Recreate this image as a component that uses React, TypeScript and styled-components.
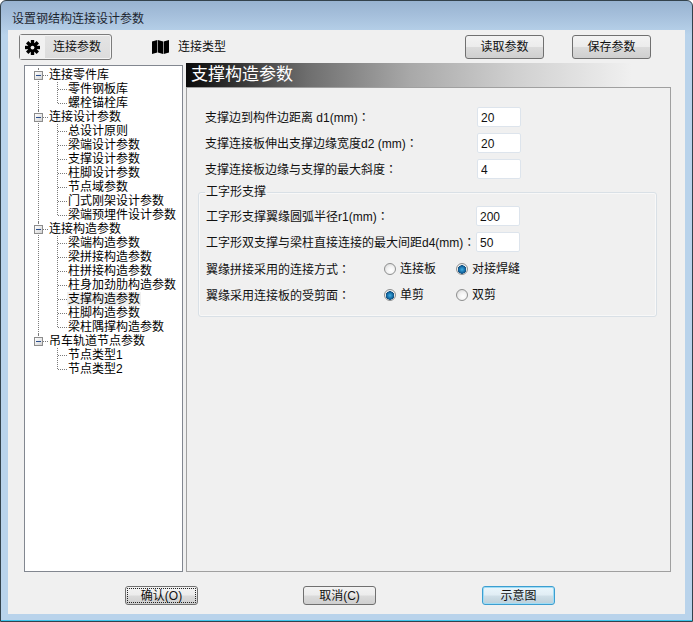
import styled, { createGlobalStyle } from "styled-components"

const GlobalStyle = createGlobalStyle`
    html, body {
        margin: 0;
        padding: 0;
        background: #fff;
    }
    * {
        box-sizing: border-box;
    }
`;

const FONT = `"Liberation Sans", "Noto Sans CJK SC", sans-serif`;

const Win = styled.div`
    width: 693px;
    height: 622px;
    display: flex;
    flex-direction: column;
    border: 1px solid #33424c;
    border-radius: 6px 6px 0 0;
    background: linear-gradient(#98b3d1 0, #a5bfdb 14px, #b9d3eb 34px, #b9d3eb 100%);
    box-shadow: inset 0 -1px 0 #3fc4ea;
    font: 12px/14px ${FONT};
    color: #111;
    overflow: hidden;
`;
const TitleBar = styled.div`
    height: 29px;
    flex: none;
    display: flex;
    align-items: center;
    padding: 7px 0 0 11px;
    color: #1c2530;
`;
const Client = styled.div`
    flex: 1;
    margin: 0 7px 7px 7px;
    background: #f0f0f0;
    display: flex;
    flex-direction: column;
`;
const Toolbar = styled.div`
    height: 33px;
    flex: none;
    display: flex;
    align-items: center;
    padding: 1px 34px 0 11px;
`;
const ToolTab = styled.div<{ $active?: boolean }>`
    width: 93px;
    height: 26px;
    display: flex;
    align-items: center;
    border-radius: 3px;
    margin-right: 36px;
    ${(p) => p.$active && `
        border: 1px solid #7c7c7c;
        background: linear-gradient(#e4e4e4, #dcdcdc);
        box-shadow: inset 0 0 0 1px #f4f4f4;
    `}
`;
const TabIcon = styled.span<{ $active?: boolean }>`
    width: 25px;
    height: 24px;
    margin-right: ${(p) => (p.$active ? "8px" : "5px")};
    flex: none;
    display: flex;
    align-items: center;
    justify-content: center;
    background: ${(p) => (p.$active ? "#f1f1f1" : "transparent")};
`;
const Spacer = styled.div`
    flex: 1;
`;
const ToolButton = styled.button`
    height: 24px;
    width: 79px;
    margin-left: 28px;
    padding: 0;
    border: 1px solid #707070;
    border-radius: 3px;
    background: linear-gradient(#f3f3f3 0, #ececec 48%, #dbdbdb 52%, #cfcfcf 100%);
    font: 12px/14px ${FONT};
    color: #111;
`;
const Main = styled.div`
    height: 509px;
    flex: none;
    display: flex;
    gap: 3px;
    padding: 0 14px 0 16px;
`;
const Tree = styled.div`
    width: 159px;
    height: 507px;
    margin-top: 2px;
    padding-top: 2px;
    background: #fff;
    border: 1px solid #828790;
    color: #000;
    font-size: 12px;
`;
const TopGroup = styled.div<{ $last?: boolean }>`
    position: relative;
    &::before {
        content: "";
        position: absolute;
        left: 13px;
        top: 0;
        height: ${(p) => (p.$last ? "6px" : "100%")};
        border-left: 1px dotted #7a7a7a;
    }
`;
const TopRow = styled.div`
    position: relative;
    height: 14px;
    display: flex;
    align-items: center;
    padding-left: 9px;
`;
const Expander = styled.span`
    position: relative;
    z-index: 1;
    width: 9px;
    height: 9px;
    flex: none;
    border: 1px solid #8c8c8c;
    background: linear-gradient(135deg, #fff, #d4d4d4);
    &::after {
        content: "";
        position: absolute;
        left: 1px;
        right: 1px;
        top: 3px;
        height: 1px;
        background: #2b4e8c;
    }
`;
const TopStub = styled.span`
    width: 5px;
    flex: none;
    border-top: 1px dotted #7a7a7a;
`;
const ChildList = styled.div`
    position: relative;
    &::before {
        content: "";
        position: absolute;
        left: 32px;
        top: 0;
        bottom: 7px;
        border-left: 1px dotted #7a7a7a;
    }
`;
const ChildRow = styled.div`
    height: 14px;
    display: flex;
    align-items: center;
    padding-left: 33px;
`;
const ChildStub = styled.span`
    width: 9px;
    flex: none;
    border-top: 1px dotted #7a7a7a;
`;
const NodeLabel = styled.span<{ $selected?: boolean }>`
    padding: 0 1px;
    white-space: nowrap;
    line-height: 14px;
    background: ${(p) => (p.$selected ? "#efefef" : "transparent")};
`;
const Right = styled.div`
    width: 485px;
    display: flex;
    flex-direction: column;
`;
const Banner = styled.div`
    height: 24px;
    flex: none;
    padding-left: 5px;
    display: flex;
    align-items: center;
    background: linear-gradient(90deg, #0a0a0a 0, #6e6e6e 25%, #a8a8a8 46%, #d0d0d0 68%, #f0f0f0 92%);
    color: #fff;
    font-size: 17px;
`;
const Panel = styled.div`
    flex: 1;
    border: 1px solid #a0a0a0;
    padding: 19px 13px 0 11px;
`;
const FormRow = styled.div<{ $spaced?: boolean }>`
    height: 20px;
    margin-bottom: ${(p) => (p.$spaced ? "7px" : "6px")};
    display: flex;
    align-items: center;
    padding-left: 7px;
`;
const Label = styled.span`
    white-space: nowrap;
`;
const Colon = styled.span`
    font-family: "Noto Sans CJK TC", sans-serif;
`;
const NumberInput = styled.input`
    width: 44px;
    height: 20px;
    margin-left: auto;
    margin-right: 136px;
    padding: 1px 0 0 3px;
    border: 1px solid #dde4ec;
    border-radius: 2px;
    background: #fff;
    font: 12px/14px ${FONT};
    color: #111;
    outline: none;
`;
const Group = styled.fieldset`
    margin: 0;
    padding: 7px 0 0;
    height: 132px;
    border: 1px solid #d9e0e6;
    border-radius: 3px;
    box-shadow: 0 0 0 1px #f8f8f8 inset;
`;
const GroupTitle = styled.legend`
    margin-left: 6px;
    padding: 0 1px;
    line-height: 14px;
`;
const RadioArea = styled.div`
    margin-left: auto;
    margin-right: 136px;
    width: 136px;
    display: grid;
    grid-template-columns: 72px 64px;
`;
const RadioItem = styled.label`
    display: flex;
    align-items: center;
    gap: 4px;
    white-space: nowrap;
`;
const Radio = styled.input`
    appearance: none;
    width: 12px;
    height: 12px;
    margin: 0;
    flex: none;
    border: 1px solid #8e8f8f;
    border-radius: 50%;
    background: radial-gradient(circle at 60% 65%, #fff 0, #f2f2f2 45%, #cfcfcf 100%);
    &:checked {
        background: radial-gradient(circle at 50% 55%, #3fb0e6 0, #14669f 42%, #0f4f80 54%, #f0f0f0 60%, #e6e6e6 100%);
    }
`;
const Footer = styled.div`
    flex: 1;
    display: flex;
    padding: 14px 0 0 117px;
    gap: 105px;
`;
const DlgButton = styled.button<{ $variant?: "focus" | "hover" }>`
    width: 73px;
    height: 19px;
    padding: 0;
    border: 1px solid ${(p) => (p.$variant === "hover" ? "#3c9ed0" : "#707070")};
    border-radius: 3px;
    margin-left: ${(p) => (p.$variant === "hover" ? "1px" : "0")};
    background: ${(p) =>
        p.$variant === "hover"
            ? "linear-gradient(#eaf6fc 0, #e0edf4 48%, #cfdfe8 52%, #bccfd9 100%)"
            : "linear-gradient(#f3f3f3 0, #ececec 48%, #dbdbdb 52%, #cfcfcf 100%)"};
    box-shadow: ${(p) => (p.$variant === "hover" ? "inset 0 0 0 1px #9fdcf5" : "none")};
    font: 12px/14px ${FONT};
    color: #111;
    ${(p) => p.$variant === "focus" && `
        outline: 1px dotted #222;
        outline-offset: -3px;
    `}
`;

const tree = [
    { name: "连接零件库", items: ["零件钢板库", "螺栓锚栓库"] },
    {
        name: "连接设计参数",
        items: ["总设计原则", "梁端设计参数", "支撑设计参数", "柱脚设计参数", "节点域参数", "门式刚架设计参数", "梁端预埋件设计参数"],
    },
    {
        name: "连接构造参数",
        items: ["梁端构造参数", "梁拼接构造参数", "柱拼接构造参数", "柱身加劲肋构造参数", "支撑构造参数", "柱脚构造参数", "梁柱隅撑构造参数"],
    },
    { name: "吊车轨道节点参数", items: ["节点类型1", "节点类型2"] },
];

function GearIcon() {
    const teeth = [0, 45, 90, 135];
    return (
        <svg width="15" height="15" viewBox="0 0 16 16">
            {teeth.map((a) => (
                <rect key={a} x="6.2" y="0" width="3.6" height="16" fill="#000" transform={`rotate(${a} 8 8)`} />
            ))}
            <circle cx="8" cy="8" r="5" fill="#000" />
            <circle cx="8" cy="8" r="2" fill="#f1f1f1" />
        </svg>
    );
}

function MapIcon() {
    return (
        <svg width="17" height="14" viewBox="0 0 17 14">
            <path d="M0 1.5 L5.3 0 L5.3 12.5 L0 14 Z" fill="#000" />
            <path d="M5.9 0 L11.1 1.5 L11.1 14 L5.9 12.5 Z" fill="#000" />
            <path d="M11.7 1.5 L17 0 L17 12.5 L11.7 14 Z" fill="#000" />
        </svg>
    );
}

export default function App() {
    return (
        <Win>
            <GlobalStyle />
            <TitleBar>设置钢结构连接设计参数</TitleBar>
            <Client>
                <Toolbar>
                    <ToolTab $active>
                        <TabIcon $active><GearIcon /></TabIcon>
                        连接参数
                    </ToolTab>
                    <ToolTab>
                        <TabIcon><MapIcon /></TabIcon>
                        连接类型
                    </ToolTab>
                    <Spacer />
                    <ToolButton>读取参数</ToolButton>
                    <ToolButton>保存参数</ToolButton>
                </Toolbar>
                <Main>
                    <Tree>
                        {tree.map((g, i) => (
                            <TopGroup key={g.name} $last={i === tree.length - 1}>
                                <TopRow>
                                    <Expander />
                                    <TopStub />
                                    <NodeLabel>{g.name}</NodeLabel>
                                </TopRow>
                                <ChildList>
                                    {g.items.map((item) => (
                                        <ChildRow key={item}>
                                            <ChildStub />
                                            <NodeLabel $selected={item === "支撑构造参数"}>{item}</NodeLabel>
                                        </ChildRow>
                                    ))}
                                </ChildList>
                            </TopGroup>
                        ))}
                    </Tree>
                    <Right>
                        <Banner>支撑构造参数</Banner>
                        <Panel>
                            <FormRow>
                                <Label>支撑边到构件边距离 d1(mm)<Colon>：</Colon></Label>
                                <NumberInput readOnly value="20" />
                            </FormRow>
                            <FormRow>
                                <Label>支撑连接板伸出支撑边缘宽度d2 (mm)<Colon>：</Colon></Label>
                                <NumberInput readOnly value="20" />
                            </FormRow>
                            <FormRow>
                                <Label>支撑连接板边缘与支撑的最大斜度<Colon>：</Colon></Label>
                                <NumberInput readOnly value="4" />
                            </FormRow>
                            <Group>
                                <GroupTitle>工字形支撑</GroupTitle>
                                <FormRow>
                                    <Label>工字形支撑翼缘圆弧半径r1(mm)<Colon>：</Colon></Label>
                                    <NumberInput readOnly value="200" />
                                </FormRow>
                                <FormRow $spaced>
                                    <Label>工字形双支撑与梁柱直接连接的最大间距d4(mm)<Colon>：</Colon></Label>
                                    <NumberInput readOnly value="50" />
                                </FormRow>
                                <FormRow>
                                    <Label>翼缘拼接采用的连接方式<Colon>：</Colon></Label>
                                    <RadioArea>
                                        <RadioItem><Radio type="radio" name="splice" />连接板</RadioItem>
                                        <RadioItem><Radio type="radio" name="splice" defaultChecked />对接焊缝</RadioItem>
                                    </RadioArea>
                                </FormRow>
                                <FormRow>
                                    <Label>翼缘采用连接板的受剪面<Colon>：</Colon></Label>
                                    <RadioArea>
                                        <RadioItem><Radio type="radio" name="shear" defaultChecked />单剪</RadioItem>
                                        <RadioItem><Radio type="radio" name="shear" />双剪</RadioItem>
                                    </RadioArea>
                                </FormRow>
                            </Group>
                        </Panel>
                    </Right>
                </Main>
                <Footer>
                    <DlgButton $variant="focus">确认(O)</DlgButton>
                    <DlgButton>取消(C)</DlgButton>
                    <DlgButton $variant="hover">示意图</DlgButton>
                </Footer>
            </Client>
        </Win>
    );
}
